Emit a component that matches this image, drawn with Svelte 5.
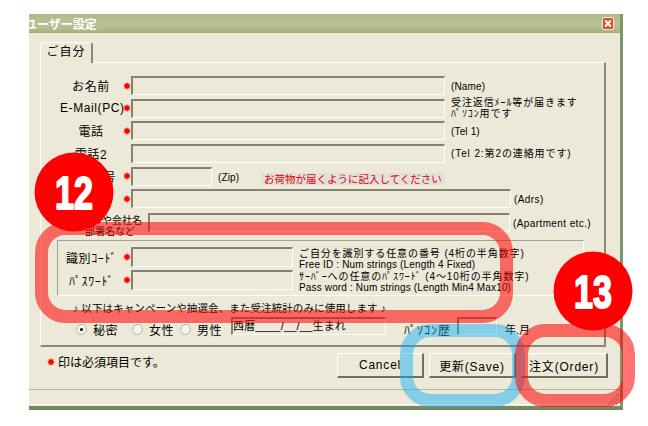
<script>
	const rows = [
		{ label: 'お名前', req: true, note: '(Name)', jp: false },
		{ label: 'E-Mail(PC)', req: true, note: '受注返信ﾒｰﾙ等が届きます\nﾊﾟｿｺﾝ用です', jp: true },
		{ label: '電話', req: true, note: '(Tel 1)', jp: false },
		{ label: '電話2', req: false, note: '(Tel 2:第2の連絡用です)', jp: true }
	];
</script>

{#snippet star()}
	<svg class="star" viewBox="0 0 8 8" aria-hidden="true">
		<path d="M4 0l1 2 2-1-1 2 2 1-2 1 1 2-2-1-1 2-1-2-2 1 1-2-2-1 2-1-1-2 2 1z" fill="#f00" />
	</svg>
{/snippet}

<div class="window">
	<div class="title">
		<span>ユーザー設定</span>
		<svg class="close" viewBox="0 0 12 13" aria-hidden="true">
			<rect x="0.5" y="0.5" width="11" height="12" rx="1.5" fill="#d0562c" stroke="#f4e4dc" />
			<path d="M3.2 3.5l5.6 6M8.8 3.5l-5.6 6" stroke="#fff" stroke-width="2" />
		</svg>
	</div>

	<div class="client">
		<div class="tab">ご自分</div>
		<div class="page">
			<div class="rows">
				{#each rows as row}
					<div class="row">
						<span class="label">{row.label}</span>
						<span class="mark">{#if row.req}{@render star()}{/if}</span>
						<div class="field wide"></div>
						<span class="note" class:jp={row.jp}>{row.note}</span>
					</div>
				{/each}
				<div class="row">
					<span class="label">郵便番号</span>
					<span class="mark">{@render star()}</span>
					<div class="field zip"></div>
					<span class="note zipnote">(Zip)</span>
					<span class="notice">お荷物が届くように記入してください</span>
				</div>
				<div class="row">
					<span class="label">ご住所</span>
					<span class="mark">{@render star()}</span>
					<div class="field long"></div>
					<span class="note near">(Adrs)</span>
				</div>
				<div class="row apt">
					<span class="aptlabel">ﾏﾝｼｮﾝや会社名<br /><em>部署名など</em></span>
					<div class="field aptfield"></div>
					<span class="note near">(Apartment etc.)</span>
				</div>
			</div>

			<div class="group">
				<div class="row">
					<span class="label">識別ｺｰﾄﾞ</span>
					<span class="mark">{@render star()}</span>
					<div class="field short"></div>
					<span class="note tight"><span class="jp">ご自分を識別する任意の番号 (4桁の半角数字)</span><br />Free ID : Num strings (Length 4 Fixed)</span>
				</div>
				<div class="row">
					<span class="label">ﾊﾟｽﾜｰﾄﾞ</span>
					<span class="mark">{@render star()}</span>
					<div class="field short"></div>
					<span class="note tight"><span class="jp">ｻｰﾊﾞｰへの任意のﾊﾟｽﾜｰﾄﾞ (4～10桁の半角数字)</span><br />Pass word : Num strings (Length Min4 Max10)</span>
				</div>
			</div>

			<p class="survey">♪ 以下はキャンペーンや抽選会、また受注統計のみに使用します ♪</p>

			<div class="extras">
				<span class="radio on"></span><span class="opt">秘密</span>
				<span class="radio"></span><span class="opt girl">女性</span>
				<span class="radio"></span><span class="opt boy">男性</span>
				<div class="field birth">西暦____/__/__生まれ</div>
				<span class="pc">ﾊﾟｿｺﾝ歴</span>
				<div class="field years"></div>
				<span class="unit">年.月</span>
			</div>
		</div>

		<div class="footer">
			<span class="required">{@render star()}<span>印は必須項目です。</span></span>
			<div class="buttons">
				<button type="button">Cancel</button>
				<button type="button">更新(Save)</button>
				<button type="button">注文(Order)</button>
			</div>
		</div>

		<div class="status"></div>
	</div>
</div>

<svg class="annotations" viewBox="0 0 648 426" aria-hidden="true">
	<path d="M608 405l11-11M612 405l7-7M616 405l3-3" stroke="#9a9784" stroke-width="1" />
	<rect x="406.5" y="330.5" width="112" height="70" rx="24" class="ring blue" />
	<rect x="41.5" y="228.5" width="465" height="88" rx="24" class="ring red" />
	<rect x="521.5" y="330.5" width="107" height="70" rx="24" class="ring red" />
	<circle cx="74" cy="192" r="39.5" fill="#f00" />
	<circle cx="593" cy="291" r="39.5" fill="#f00" />
	<text transform="translate(74 209) scale(0.74 1)" class="num">12</text>
	<text transform="translate(593 308) scale(0.74 1)" class="num">13</text>
</svg>

<style>
	:global(body) {
		margin: 0;
		background: #fff;
		font-family: 'Liberation Sans', 'Noto Sans CJK JP', sans-serif;
		font-size: 12px;
		color: #000;
	}

	.window {
		box-sizing: border-box;
		width: 594px;
		height: 396px;
		margin: 14px 0 0 29px;
		display: flex;
		flex-direction: column;
		background: #ece9d8;
		border-right: 3px solid #7f9668;
		border-bottom: 4px solid #74895e;
		overflow: hidden;
	}

	.title {
		flex: none;
		height: 19px;
		box-sizing: border-box;
		padding: 0 3px 0 0;
		display: flex;
		align-items: center;
		justify-content: space-between;
		background: linear-gradient(#b0ba88, #b9c296 60%, #a9b37e);
		border-bottom: 1px solid #a3ad78;
		color: #fff;
		font-weight: 700;
		font-size: 12px;
	}

	.title span {
		margin-left: -4px;
	}

	.close {
		width: 12px;
		height: 13px;
		margin-right: 3px;
	}

	.client {
		flex: 1;
		min-height: 0;
		display: flex;
		flex-direction: column;
		padding: 9px 14px 0 11px;
	}

	.tab {
		box-sizing: border-box;
		width: 53px;
		height: 21px;
		margin-bottom: -1px;
		position: relative;
		z-index: 1;
		background: #ece9d8;
		border: 1px solid #fff;
		border-right: 2px solid #8a8774;
		border-bottom: none;
		border-radius: 3px 3px 0 0;
		line-height: 19px;
		text-align: center;
		letter-spacing: 1px;
	}

	.page {
		box-sizing: border-box;
		height: 285px;
		padding: 13px 0 0 0;
		border: 1px solid #fff;
		border-right: 2px solid #8a8774;
		border-bottom: 2px solid #8a8774;
	}

	.rows {
		display: flex;
		flex-direction: column;
		gap: 3.7px;
	}

	.row {
		height: 19px;
		display: flex;
		align-items: center;
	}

	.apt {
		margin-top: 1px;
	}

	.label {
		width: 62px;
		margin-left: 19px;
		flex: none;
		text-align: center;
		white-space: nowrap;
		letter-spacing: 0.6px;
	}

	.mark {
		width: 9px;
		flex: none;
		display: flex;
		justify-content: center;
	}

	.star {
		width: 8px;
		height: 8px;
		flex: none;
	}

	.field {
		box-sizing: border-box;
		height: 19px;
		flex: none;
		border-top: 2px solid #858272;
		border-left: 2px solid #858272;
		border-right: 1px solid #fff;
		border-bottom: 1px solid #fff;
	}

	.wide {
		width: 314px;
	}

	.zip {
		width: 81px;
	}

	.long {
		width: 380px;
	}

	.short {
		width: 162px;
	}

	.note {
		margin: 2px 0 0 6px;
		font-size: 10px;
		line-height: 11px;
		white-space: pre-line;
		letter-spacing: 0.15px;
	}

	.near {
		margin-left: 3px;
		letter-spacing: 0.4px;
	}

	.jp {
		margin-top: 0;
		font-size: 10px;
		letter-spacing: 0.9px;
	}

	.zipnote {
		width: 43px;
	}

	.notice {
		margin-top: 5px;
		padding: 0 3px;
		background: #e2e0de;
		color: #e00000;
		font-size: 10.5px;
		line-height: 12px;
		white-space: nowrap;
	}

	.aptlabel {
		width: 107px;
		flex: none;
		margin-top: 6px;
		padding-right: 6px;
		box-sizing: border-box;
		font-size: 10px;
		line-height: 11px;
		text-align: right;
		white-space: nowrap;
	}

	.aptlabel em {
		font-style: normal;
		margin-right: 7px;
	}

	.aptfield {
		width: 362px;
	}

	.group {
		box-sizing: border-box;
		width: 527px;
		height: 56px;
		margin: 8px 0 0 16px;
		padding: 6px 0 0 0;
		display: flex;
		flex-direction: column;
		gap: 3px;
		border: 1px solid #a5a292;
		border-right-color: #fff;
		border-bottom-color: #fff;
	}

	.group .row,
	.group .field {
		height: 20px;
	}

	.group .label {
		margin-left: 3px;
		width: 61px;
	}

	.tight {
		margin-top: 4px;
		line-height: 11px;
		white-space: nowrap;
	}

	.survey {
		margin: 5px 0 0 32px;
		font-size: 10.5px;
		line-height: 14px;
		letter-spacing: 0.1px;
		white-space: nowrap;
	}

	.extras {
		margin: 1px 0 0 35px;
		height: 20px;
		display: flex;
		align-items: center;
	}

	.extras .field {
		height: 18px;
	}

	.radio {
		box-sizing: border-box;
		width: 11px;
		height: 11px;
		flex: none;
		margin-top: 6px;
		border: 1px solid #b5b3a6;
		border-radius: 50%;
		background: #f4f3ea;
		display: flex;
		align-items: center;
		justify-content: center;
	}

	.radio.on::after {
		content: '';
		width: 3px;
		height: 3px;
		border-radius: 50%;
		background: #000;
	}

	.opt {
		width: 45px;
		box-sizing: border-box;
		margin-top: 6px;
		padding-left: 6px;
		letter-spacing: 0.6px;
	}

	.girl {
		width: 37px;
	}

	.boy {
		width: 40px;
	}

	.birth {
		width: 155px;
		font-size: 11px;
		line-height: 14px;
		letter-spacing: 0.2px;
		white-space: nowrap;
		overflow: hidden;
	}

	.pc {
		margin: 6px 0 0 18px;
		width: 53px;
		font-size: 12px;
		letter-spacing: 1px;
		white-space: nowrap;
	}

	.years {
		width: 40px;
	}

	.unit {
		margin: 6px 0 0 8px;
		font-size: 11px;
	}

	.footer {
		display: flex;
		height: 25px;
		margin-top: 6px;
		align-items: center;
		justify-content: space-between;
	}

	.required {
		display: flex;
		align-items: center;
		gap: 3px;
		margin: -8px 0 0 7px;
	}

	.buttons {
		display: flex;
		gap: 5px;
		margin-right: -2px;
	}

	button {
		box-sizing: border-box;
		width: 87px;
		height: 25px;
		padding: 0;
		background: #ece9d8;
		border: 1px solid #fff;
		border-right: 2px solid #716f64;
		border-bottom: 2px solid #716f64;
		font: inherit;
		letter-spacing: 0.8px;
	}

	.status {
		margin: 11px -14px 0 -11px;
		height: 14px;
		border-top: 1px solid #b8b5a3;
		border-bottom: 1px solid #fff;
	}

	.annotations {
		position: absolute;
		left: 0;
		top: 0;
		width: 648px;
		height: 426px;
		pointer-events: none;
	}

	.ring {
		fill: none;
		stroke-width: 13;
	}

	.red {
		stroke: rgba(255, 0, 0, 0.55);
	}

	.blue {
		stroke: rgba(0, 172, 249, 0.43);
	}

	.num {
		font-family: 'Liberation Sans', sans-serif;
		font-size: 46px;
		font-weight: 700;
		fill: #fff;
		stroke: #fff;
		stroke-width: 2;
		stroke-linejoin: round;
		text-anchor: middle;
	}
</style>
